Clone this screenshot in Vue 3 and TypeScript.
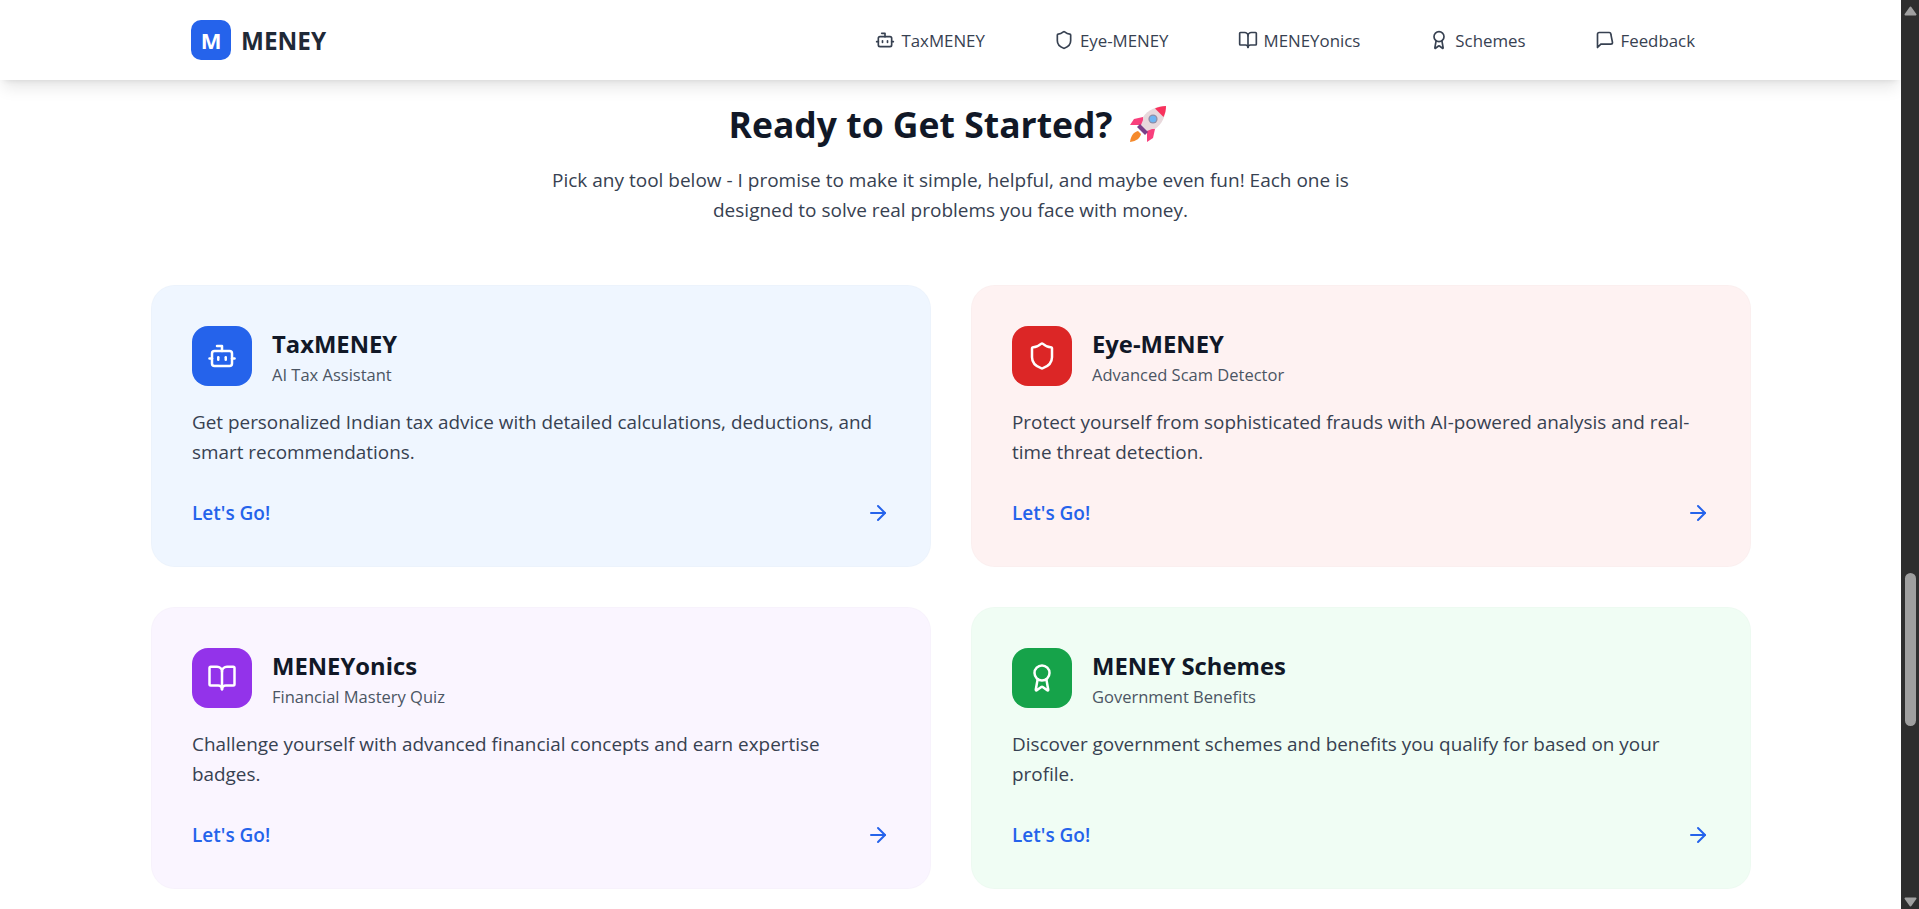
<template>
  <div class="screen">
    <div class="page">
      <header class="topbar">
        <div class="topbar-inner">
          <div class="brand">
            <span class="brand-mark">M</span>
            <span class="brand-name">MENEY</span>
          </div>
          <nav class="nav">
            <a v-for="item in navItems" :key="item.label" class="nav-link">
              <svg class="nav-icon" viewBox="0 0 24 24">
                <path v-for="d in icons[item.icon]" :key="d" :d="d" />
              </svg>
              {{ item.label }}
            </a>
          </nav>
        </div>
      </header>

      <main class="content">
        <h2 class="headline">
          Ready to Get Started?
          <svg class="rocket" viewBox="0 0 40 40">
            <path d="M38 2c-10 0-18 4-23 11l-4 7 9 9 7-4c7-5 11-13 11-23z" fill="#e8d8dc" />
            <path d="M38 2c-4 0-8 1-11 2.500l8.500 8.500c1.500-3 2.500-7 2.500-11z" fill="#f8315c" />
            <circle cx="25" cy="15" r="4.600" fill="#8f8fa8" />
            <circle cx="25" cy="15" r="3.300" fill="#6fb4f2" />
            <path d="M15 13 6 15l-4 6 11 0 2-5z" fill="#f83f7c" />
            <path d="M27 25l-2 9-6 4 0-11 5-2z" fill="#f83f7c" />
            <path d="M12 20l8 8-3 3-8-8z" fill="#7a3f88" />
            <path d="M10 27c-4 1-7 4-8 11 7-1 10-4 11-8z" fill="#f58a2c" />
          </svg>
        </h2>
        <p class="lead">
          Pick any tool below - I promise to make it simple, helpful, and maybe even fun! Each one is
          designed to solve real problems you face with money.
        </p>

        <section class="cards">
          <article v-for="card in cards" :key="card.title" class="card" :class="card.tone">
            <div class="card-head">
              <span class="card-icon">
                <svg viewBox="0 0 24 24">
                  <path v-for="d in icons[card.icon]" :key="d" :d="d" />
                </svg>
              </span>
              <div>
                <h3 class="card-title">{{ card.title }}</h3>
                <div class="card-sub">{{ card.sub }}</div>
              </div>
            </div>
            <p class="card-text">{{ card.text }}</p>
            <div class="card-foot">
              <span>Let's Go!</span>
              <svg class="arrow" viewBox="0 0 24 24">
                <path v-for="d in icons.arrow" :key="d" :d="d" />
              </svg>
            </div>
          </article>
        </section>
      </main>
    </div>

    <div class="scrollbar">
      <svg class="sb-btn sb-up" viewBox="0 0 13 10"><path d="M6.500 1.500 11.500 8.500H1.500z" /></svg>
      <div class="sb-track"><span class="sb-thumb"></span></div>
      <svg class="sb-btn sb-down" viewBox="0 0 13 10"><path d="M1.500 1.500H11.500L6.500 8.500z" /></svg>
    </div>
  </div>
</template>

<script setup lang="ts">
const icons: Record<string, string[]> = {
  bot: [
    "M12 8V4H8",
    "M6 8h12a2 2 0 0 1 2 2v8a2 2 0 0 1-2 2H6a2 2 0 0 1-2-2v-8a2 2 0 0 1 2-2z",
    "M2 14h2",
    "M20 14h2",
    "M15 13v2",
    "M9 13v2",
  ],
  shield: [
    "M20 13c0 5-3.500 7.500-7.660 8.950a1 1 0 0 1-.67-.01C7.500 20.500 4 18 4 13V6a1 1 0 0 1 1-1c2 0 4.500-1.200 6.240-2.720a1.170 1.170 0 0 1 1.520 0C14.510 3.810 17 5 19 5a1 1 0 0 1 1 1z",
  ],
  book: [
    "M12 7v14",
    "M3 18a1 1 0 0 1-1-1V4a1 1 0 0 1 1-1h5a4 4 0 0 1 4 4 4 4 0 0 1 4-4h5a1 1 0 0 1 1 1v13a1 1 0 0 1-1 1h-6a3 3 0 0 0-3 3 3 3 0 0 0-3-3z",
  ],
  award: [
    "m15.477 12.890 1.515 8.526a.5.5 0 0 1-.81.470l-3.580-2.687a1 1 0 0 0-1.197 0l-3.586 2.686a.5.5 0 0 1-.81-.469l1.514-8.526",
    "M18 8a6 6 0 1 1-12 0 6 6 0 0 1 12 0z",
  ],
  message: ["M21 15a2 2 0 0 1-2 2H7l-4 4V5a2 2 0 0 1 2-2h12a2 2 0 0 1 2 2z"],
  arrow: ["M5 12h14", "m12 5 7 7-7 7"],
};

const navItems = [
  { label: "TaxMENEY", icon: "bot" },
  { label: "Eye-MENEY", icon: "shield" },
  { label: "MENEYonics", icon: "book" },
  { label: "Schemes", icon: "award" },
  { label: "Feedback", icon: "message" },
];

const cards = [
  {
    title: "TaxMENEY",
    sub: "AI Tax Assistant",
    text: "Get personalized Indian tax advice with detailed calculations, deductions, and smart recommendations.",
    icon: "bot",
    tone: "blue",
  },
  {
    title: "Eye-MENEY",
    sub: "Advanced Scam Detector",
    text: "Protect yourself from sophisticated frauds with AI-powered analysis and real-time threat detection.",
    icon: "shield",
    tone: "red",
  },
  {
    title: "MENEYonics",
    sub: "Financial Mastery Quiz",
    text: "Challenge yourself with advanced financial concepts and earn expertise badges.",
    icon: "book",
    tone: "purple",
  },
  {
    title: "MENEY Schemes",
    sub: "Government Benefits",
    text: "Discover government schemes and benefits you qualify for based on your profile.",
    icon: "award",
    tone: "green",
  },
];
</script>

<style>
html,
body {
  margin: 0;
  height: 100%;
  overflow: hidden;
  background: #fff;
}
</style>

<style scoped>
.screen {
  display: flex;
  height: 909px;
  overflow: hidden;
  font-family: "Open Sans", "Noto Sans", sans-serif;
  color: #111827;
}
.page {
  flex: 1;
  min-width: 0;
  background: #fff;
}
.topbar {
  height: 80px;
  background: #fff;
  box-shadow: 0 10px 15px -3px rgba(0, 0, 0, 0.1), 0 4px 6px -4px rgba(0, 0, 0, 0.1);
}
.topbar-inner {
  display: flex;
  align-items: center;
  justify-content: space-between;
  height: 100%;
  padding: 0 190px 0 191px;
}
.brand {
  display: flex;
  align-items: center;
  gap: 10px;
}
.brand-mark {
  display: flex;
  align-items: center;
  justify-content: center;
  width: 40px;
  height: 40px;
  border-radius: 10px;
  background: #2563eb;
  color: #fff;
  font-size: 22px;
  font-weight: 700;
}
.brand-name {
  font-size: 24.3px;
  font-weight: 700;
  color: #1f2937;
}
.nav {
  display: flex;
  gap: 37px;
}
.nav-link {
  display: flex;
  align-items: center;
  gap: 6px;
  padding: 8px 16px;
  font-size: 16.85px;
  font-weight: 500;
  color: #374151;
}
.nav-icon {
  width: 20px;
  height: 20px;
  fill: none;
  stroke: currentColor;
  stroke-width: 2;
  stroke-linecap: round;
  stroke-linejoin: round;
}
.content {
  padding: 19px 151px 0 151px;
}
.headline {
  display: flex;
  align-items: center;
  justify-content: center;
  gap: 16px;
  margin: 0 0 16px;
  padding-right: 4px;
  font-size: 35.5px;
  line-height: 50px;
  font-weight: 700;
}
.rocket {
  width: 40px;
  height: 40px;
}
.lead {
  max-width: 830px;
  margin: 0 auto 60px;
  font-size: 19px;
  line-height: 30px;
  text-align: center;
  color: #374151;
}
.cards {
  display: grid;
  grid-template-columns: 780px 780px;
  gap: 40px;
}
.card {
  display: flex;
  flex-direction: column;
  box-sizing: border-box;
  height: 282px;
  padding: 40px;
  border: 1px solid rgba(0, 0, 0, 0.012);
  border-radius: 24px;
}
.card.blue { background: #eff6ff; }
.card.red { background: #fef2f2; }
.card.purple { background: #faf5ff; }
.card.green { background: #f0fdf4; }
.card-head {
  display: flex;
  align-items: flex-start;
  gap: 20px;
}
.card-icon {
  display: flex;
  align-items: center;
  justify-content: center;
  width: 60px;
  height: 60px;
  border-radius: 16px;
  color: #fff;
}
.blue .card-icon { background: #2563eb; }
.red .card-icon { background: #dc2626; }
.purple .card-icon { background: #9333ea; }
.green .card-icon { background: #16a34a; }
.card-icon svg {
  width: 30px;
  height: 30px;
  fill: none;
  stroke: currentColor;
  stroke-width: 2;
  stroke-linecap: round;
  stroke-linejoin: round;
}
.card-title {
  margin: 2px 0 3px;
  font-size: 23.8px;
  line-height: 32px;
  font-weight: 700;
  color: #111827;
}
.card-sub {
  font-size: 16.5px;
  line-height: 24px;
  color: #4b5563;
}
.card-text {
  margin: 20px 0 0;
  font-size: 18.9px;
  line-height: 30px;
  color: #374151;
}
.card-foot {
  display: flex;
  align-items: center;
  justify-content: space-between;
  margin-top: 32px;
  font-size: 19px;
  line-height: 28px;
  font-weight: 600;
  color: #2563eb;
}
.arrow {
  width: 24px;
  height: 24px;
  fill: none;
  stroke: currentColor;
  stroke-width: 2;
  stroke-linecap: round;
  stroke-linejoin: round;
}
.scrollbar {
  display: flex;
  flex-direction: column;
  align-items: center;
  flex: 0 0 18px;
  background: #2e2e2e;
}
.sb-btn {
  flex: none;
  width: 13px;
  height: 10px;
  fill: #a0a0a0;
  stroke: #a0a0a0;
  stroke-width: 2;
  stroke-linejoin: round;
}
.sb-up { margin: 6px 0 3px; }
.sb-down { margin: 3px 0 2px; }
.sb-track {
  flex: 1;
  width: 100%;
  padding-top: 554px;
  box-sizing: border-box;
}
.sb-thumb {
  display: block;
  width: 11px;
  height: 153px;
  margin-left: 4px;
  border-radius: 6px;
  background: #9f9f9f;
}
</style>
